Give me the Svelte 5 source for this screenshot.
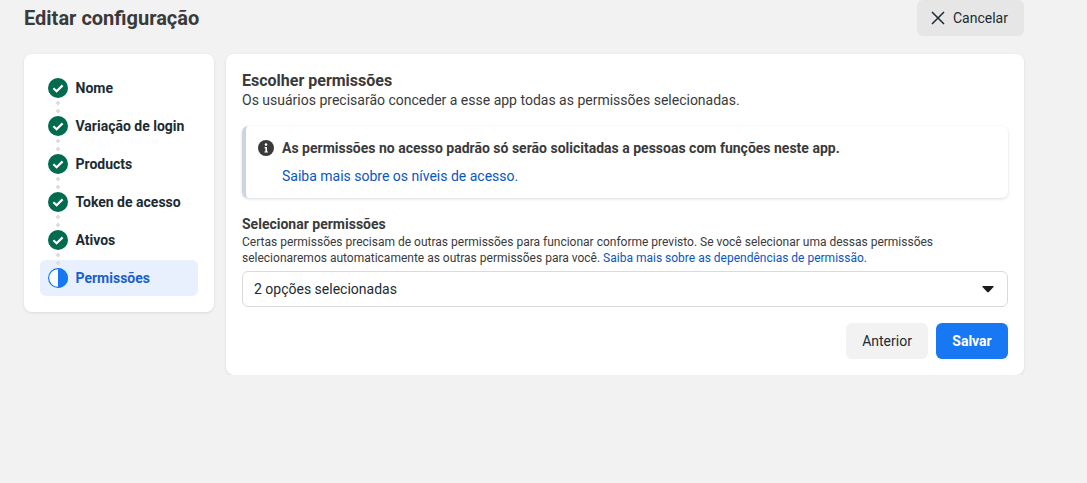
<script>
	const steps = ['Nome', 'Variação de login', 'Products', 'Token de acesso', 'Ativos'];
</script>

<div class="page">
	<header class="top">
		<h1>Editar configuração</h1>
		<button class="cancel">
			<svg width="16" height="16" viewBox="0 0 16 16" aria-hidden="true">
				<path d="M2 2 L14 14 M14 2 L2 14" stroke="#1c2b33" stroke-width="1.5" fill="none" />
			</svg>
			Cancelar
		</button>
	</header>

	<div class="columns">
		<nav class="card steps">
			{#each steps as step, i}
				<div class="step">
					<svg class="icon" width="20" height="20" viewBox="0 0 20 20" aria-hidden="true">
						<circle cx="10" cy="10" r="10" fill="#006b4f" />
						<path d="M5.4 10.3 L8.6 13.2 L14.6 7.4" stroke="#fff" stroke-width="2.2" fill="none" />
					</svg>
					<span>{step}</span>
					<i class="dots"></i>
				</div>
			{/each}
			<div class="step active">
				<svg class="icon" width="20" height="20" viewBox="0 0 20 20" aria-hidden="true">
					<circle cx="10" cy="10" r="9.4" fill="#fff" stroke="#1877f2" stroke-width="1.2" />
					<path d="M10 0 A10 10 0 0 1 10 20 Z" fill="#1877f2" />
				</svg>
				<span>Permissões</span>
			</div>
		</nav>

		<main class="card content">
			<h2>Escolher permissões</h2>
			<p class="lead">Os usuários precisarão conceder a esse app todas as permissões selecionadas.</p>

			<div class="notice">
				<div class="notice-title">
					<svg width="16" height="16" viewBox="0 0 16 16" aria-hidden="true">
						<circle cx="8" cy="8" r="8" fill="#3a3a3a" />
						<circle cx="8" cy="4.6" r="1.3" fill="#fff" />
						<path d="M6.6 7 H9 V11.4 H10 V12.6 H6.4 V11.4 H7.4 V8.2 H6.6 Z" fill="#fff" />
					</svg>
					<strong>As permissões no acesso padrão só serão solicitadas a pessoas com funções neste app.</strong>
				</div>
				<a href="#niveis" class="notice-link">Saiba mais sobre os níveis de acesso.</a>
			</div>

			<h3>Selecionar permissões</h3>
			<p class="help">
				Certas permissões precisam de outras permissões para funcionar conforme previsto. Se você selecionar uma dessas permissões
				selecionaremos automaticamente as outras permissões para você. <a href="#deps">Saiba mais sobre as dependências de permissão.</a>
			</p>

			<div class="select">
				<span>2 opções selecionadas</span>
				<svg width="12" height="7" viewBox="0 0 12 7" aria-hidden="true">
					<path d="M0.5 0 H11.5 V1 L6.8 6 Q6 6.8 5.2 6 L0.5 1 Z" fill="#1c1c1c" />
				</svg>
			</div>

			<div class="actions">
				<button class="btn prev">Anterior</button>
				<button class="btn save">Salvar</button>
			</div>
		</main>
	</div>
</div>

<style>
	:global(body) {
		background: #f2f2f2;
		font-family: Roboto, sans-serif;
		color: #1c2b33;
	}

	.page {
		width: 1000px;
		margin-left: 24px;
	}

	.top {
		display: flex;
		justify-content: space-between;
		align-items: center;
		height: 36px;
		margin-bottom: 18px;
	}

	h1 {
		margin: 0;
		font-size: 20px;
		font-weight: 700;
		color: #3a3a3a;
	}

	.cancel {
		display: flex;
		align-items: center;
		gap: 7px;
		height: 36px;
		width: 107px;
		padding: 0 0 0 13px;
		border: 0;
		border-radius: 6px;
		background: #e6e6e6;
		font: 400 14px Roboto, sans-serif;
		color: #1c2b33;
	}

	.columns {
		display: flex;
		align-items: flex-start;
		gap: 12px;
	}

	.card {
		background: #fff;
		border-radius: 8px;
		box-shadow: 0 1px 3px rgba(0, 0, 0, 0.1);
	}

	.steps {
		width: 190px;
		box-sizing: border-box;
		padding: 16px;
		display: flex;
		flex-direction: column;
		gap: 2px;
	}

	.step {
		position: relative;
		display: flex;
		align-items: center;
		gap: 7.5px;
		height: 36px;
		padding-left: 8px;
		border-radius: 6px;
		font-size: 14px;
		font-weight: 700;
		color: #1c2b33;
	}

	.icon {
		flex: none;
	}

	.dots {
		position: absolute;
		left: 16px;
		top: 31px;
		width: 4px;
		height: 12px;
		background: radial-gradient(circle at 2px 2px, #dedede 2px, transparent 2px) 0 0 / 4px 8px repeat-y;
		z-index: 1;
	}

	.active {
		background: #e7f0fc;
		color: #1c5fc9;
	}

	.content {
		width: 798px;
		box-sizing: border-box;
		padding: 16px;
	}

	h2 {
		margin: 1px 0 0;
		font-size: 16px;
		line-height: 19px;
		font-weight: 700;
		color: #3a3a3a;
	}

	.lead {
		margin: 0;
		font-size: 14px;
		line-height: 20px;
		color: #3a3a3a;
	}

	.notice {
		margin-top: 16px;
		height: 72px;
		box-sizing: border-box;
		padding: 12px 12px 0 12px;
		border-left: 4px solid #cbd5df;
		border-radius: 6px;
		box-shadow: 0 1px 3px rgba(0, 0, 0, 0.14);
	}

	.notice-title {
		display: flex;
		align-items: center;
		gap: 8px;
		height: 20px;
		font-size: 14px;
		color: #3a3a3a;
	}

	.notice-link {
		display: block;
		margin: 8px 0 0 24px;
		font-size: 14px;
		line-height: 20px;
		color: #0a56c2;
		text-decoration: none;
	}

	h3 {
		margin: 17px 0 0;
		font-size: 14px;
		line-height: 19px;
		font-weight: 700;
		color: #3a3a3a;
	}

	.help {
		margin: 0;
		font-size: 12px;
		line-height: 16px;
		color: #3a3a3a;
	}

	.help a {
		color: #0a56c2;
		text-decoration: none;
	}

	.select {
		display: flex;
		align-items: center;
		justify-content: space-between;
		margin-top: 5px;
		height: 36px;
		box-sizing: border-box;
		padding: 0 13px 0 11px;
		border: 1px solid #dadada;
		border-radius: 6px;
		font-size: 14px;
		color: #1c2b33;
	}

	.actions {
		display: flex;
		justify-content: flex-end;
		gap: 8px;
		margin-top: 16px;
	}

	.btn {
		height: 36px;
		border: 0;
		border-radius: 6px;
		font-family: Roboto, sans-serif;
		font-size: 14px;
	}

	.prev {
		width: 82px;
		background: #f2f2f2;
		color: #1c2b33;
	}

	.save {
		width: 72px;
		background: #1877f2;
		color: #fff;
		font-weight: 700;
	}
</style>
